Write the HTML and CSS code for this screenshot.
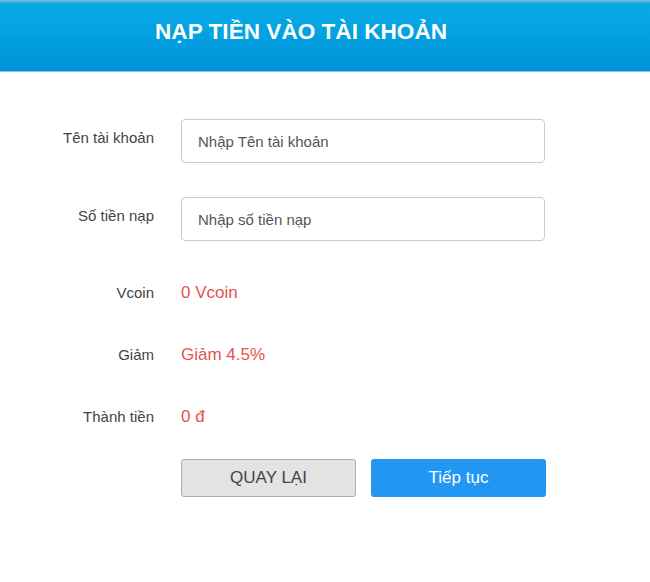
FILE: index.html
```html
<!DOCTYPE html>
<html lang="vi">
<head>
  <meta charset="UTF-8">
  <meta name="viewport" content="width=device-width, initial-scale=1.0">
  <title>Nạp tiền vào tài khoản</title>
  <link rel="stylesheet" href="styles.css">
</head>
<body>
    <div class="header">
        <h1 class="title">NẠP TIỀN VÀO TÀI KHOẢN</h1>
    </div>
    <form class="form">
        <div class="row input-row">
            <label class="label" for="account">Tên tài khoản</label>
            <input class="field" id="account" type="text" placeholder="Nhập Tên tài khoản">
        </div>
        <div class="row input-row">
            <label class="label" for="amount">Số tiền nạp</label>
            <input class="field" id="amount" type="text" placeholder="Nhập số tiền nạp">
        </div>
        <div class="row info-row">
            <span class="label">Vcoin</span>
            <span class="value">0 Vcoin</span>
        </div>
        <div class="row info-row">
            <span class="label">Giảm</span>
            <span class="value">Giảm 4.5%</span>
        </div>
        <div class="row info-row">
            <span class="label">Thành tiền</span>
            <span class="value">0 đ</span>
        </div>
        <div class="row buttons">
            <span class="label"></span>
            <button type="button" class="btn btn-back">QUAY LẠI</button>
            <button type="button" class="btn btn-next">Tiếp tục</button>
        </div>
    </form>
</body>
</html>
```

FILE: styles.css
```css
body {
    margin: 0;
    font-family: "Liberation Sans", Arial, sans-serif;
    background-color: white;
    color: #444;
}
.header {
    height: 71px;
    background: linear-gradient(to bottom, #7cbcd6 0px, #0aa9e6 4px, #03a3e2 30px, #0093d8 70px);
    border-bottom: 1px solid #7fcbee;
}
.title {
    margin: 0;
    padding-top: 19px;
    padding-left: 155px;
    font-size: 22.6px;
    font-weight: bold;
    color: white;
    line-height: 26px;
}
.form {
    padding-top: 47px;
}
.row {
    display: flex;
}
.label {
    width: 154px;
    margin-right: 27px;
    text-align: right;
    font-size: 15px;
    line-height: 20px;
    color: #444;
}
.input-row {
    margin-bottom: 34px;
}
.input-row .label {
    padding-top: 9px;
}
.field {
    width: 364px;
    height: 44px;
    box-sizing: border-box;
    border: 1px solid #ccc;
    border-radius: 4px;
    padding: 0 16px;
    font-family: "Liberation Sans", Arial, sans-serif;
    font-size: 15px;
    color: #555;
}
.field::placeholder {
    color: #555;
}
.info-row {
    align-items: baseline;
    height: 22px;
    margin-bottom: 40px;
}
.input-row + .info-row {
    margin-top: 41px;
}
.value {
    font-size: 17px;
    line-height: 22px;
    color: #e5534f;
}
.buttons {
    margin-top: -9px;
}
.btn {
    width: 175px;
    height: 38px;
    border-radius: 3px;
    font-family: "Liberation Sans", Arial, sans-serif;
    font-size: 17px;
}
.btn-back {
    background-color: #e3e3e3;
    border: 1px solid #adadad;
    color: #444;
    margin-right: 15px;
}
.btn-next {
    background-color: #2196f3;
    border: none;
    color: white;
}
```
